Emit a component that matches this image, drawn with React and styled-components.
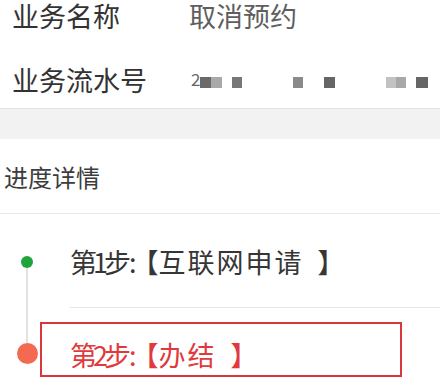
import React from 'react';
import styled, { createGlobalStyle } from 'styled-components';

const GlobalStyle = createGlobalStyle`
  html, body {
    margin: 0;
    padding: 0;
    background: #ffffff;
  }
  body {
    font-family: "Noto Sans CJK SC", "Noto Sans", sans-serif;
    overflow: hidden;
  }
`;

const info = [
  { label: '业务名称', value: '取消预约' },
  { label: '业务流水号', masked: true },
];

// pixelated serial number blocks: [left margin, width, colour]
const maskBlocks = [
  [0, 11, '#6a6a6a'],
  [0, 11, '#a9a9a9'],
  [10, 10, '#777777'],
  [51, 10, '#8a8a8a'],
  [21, 11, '#666666'],
  [51, 10, '#c2c2c2'],
  [0, 10, '#a8a8a8'],
  [10, 12, '#666666'],
];

const steps = [
  { prefix: '第1步', name: '互联网申请', done: true },
  { prefix: '第2步', name: '办结', current: true },
];

const Page = styled.div`
  width: 440px;
  height: 381px;
  overflow: hidden;
  background: #fff;
`;

const InfoRow = styled.div`
  display: flex;
  align-items: flex-start;
  height: 64px;
  box-sizing: border-box;
  padding: 22px 0 0 12px;
  font-size: 27px;
  line-height: 27px;

  &:first-child {
    height: 44px;
    padding-top: 2px;
  }
`;

const Label = styled.div`
  width: 177px;
  flex-shrink: 0;
  color: #333;
  white-space: nowrap;
`;

const Value = styled.div`
  color: #5e5e5e;
  white-space: nowrap;
`;

const Masked = styled.div`
  display: flex;
  align-items: center;
  height: 27px;
  padding-left: 2px;
`;

const Digit = styled.span`
  font-size: 17px;
  line-height: 20px;
  color: #666;
  margin-top: -1px;
`;

const Block = styled.span`
  width: ${p => p.$w}px;
  height: 11px;
  margin-left: ${p => p.$ml}px;
  margin-top: 6px;
  background: ${p => p.$c};
`;

const Band = styled.div`
  height: 31px;
  background: #f2f2f2;
  border-top: 1px solid #e4e4e4;
  box-sizing: border-box;
`;

const SectionHeader = styled.div`
  height: 75px;
  box-sizing: border-box;
  padding: 26px 0 0 4px;
  font-size: 24px;
  line-height: 24px;
  color: #3c3c3c;
  border-bottom: 1px solid #e8e8e8;
`;

const Timeline = styled.div`
  display: flex;
  flex-direction: column;
`;

const Step = styled.div`
  position: relative;
  display: flex;
  height: ${p => p.$h}px;
`;

const Rail = styled.div`
  width: 54px;
  flex-shrink: 0;
  display: flex;
  flex-direction: column;
  align-items: center;
  padding-top: ${p => p.$top}px;
  box-sizing: border-box;
`;

const Line = styled.div`
  width: 2px;
  background: #e2e2e2;
  flex: ${p => (p.$fill ? 1 : 'none')};
  height: ${p => (p.$fill ? 'auto' : `${p.$h}px`)};
`;

const Dot = styled.div`
  width: ${p => p.$size}px;
  height: ${p => p.$size}px;
  border-radius: 50%;
  background: ${p => p.$color};
  flex-shrink: 0;
`;

const StepBody = styled.div`
  flex: 1;
  display: flex;
  align-items: flex-start;
  margin-left: 16px;
  box-sizing: border-box;
  padding-top: ${p => p.$top}px;
  font-size: 27px;
  line-height: 27px;
  white-space: nowrap;
  color: ${p => (p.$current ? '#e03a3c' : '#363636')};
  border-bottom: ${p => (p.$divider ? '1px solid #e6e6e6' : 'none')};
`;

const Prefix = styled.span`
  letter-spacing: -4px;
`;

const Colon = styled.span`
  margin-left: 2px;
  letter-spacing: -4px;
`;

const Bracket = styled.span`
  margin-left: ${p => (p.$close ? 14 : -1)}px;
`;

const StepName = styled.span`
  letter-spacing: 2px;
`;

const Highlight = styled.div`
  position: absolute;
  left: 40px;
  top: 14px;
  width: 362px;
  height: 55px;
  box-sizing: border-box;
  border: 2px solid #d9373c;
  pointer-events: none;
`;

const StepTitle = ({ step, top, divider }) => (
  <StepBody $top={top} $divider={divider} $current={step.current}>
    <Prefix>{step.prefix}</Prefix>
    <Colon>:</Colon>
    <Bracket>【</Bracket>
    <StepName>{step.name}</StepName>
    <Bracket $close>】</Bracket>
  </StepBody>
);

export default function App() {
  return (
    <Page>
      <GlobalStyle />
      {info.map(row => (
        <InfoRow key={row.label}>
          <Label>{row.label}</Label>
          {row.masked ? (
            <Masked>
              <Digit>2</Digit>
              {maskBlocks.map(([ml, w, c], i) => (
                <Block key={i} $ml={ml} $w={w} $c={c} />
              ))}
            </Masked>
          ) : (
            <Value>{row.value}</Value>
          )}
        </InfoRow>
      ))}
      <Band />
      <SectionHeader>进度详情</SectionHeader>
      <Timeline>
        <Step $h={94}>
          <Rail $top={42}>
            <Dot $size={12} $color="#1fa43c" />
            <Line $fill />
          </Rail>
          <StepTitle step={steps[0]} top={34} divider />
        </Step>
        <Step $h={80}>
          <Rail $top={0}>
            <Line $h={35} />
            <Dot $size={21} $color="#f46a50" />
          </Rail>
          <StepTitle step={steps[1]} top={33} />
          <Highlight />
        </Step>
      </Timeline>
    </Page>
  );
}
